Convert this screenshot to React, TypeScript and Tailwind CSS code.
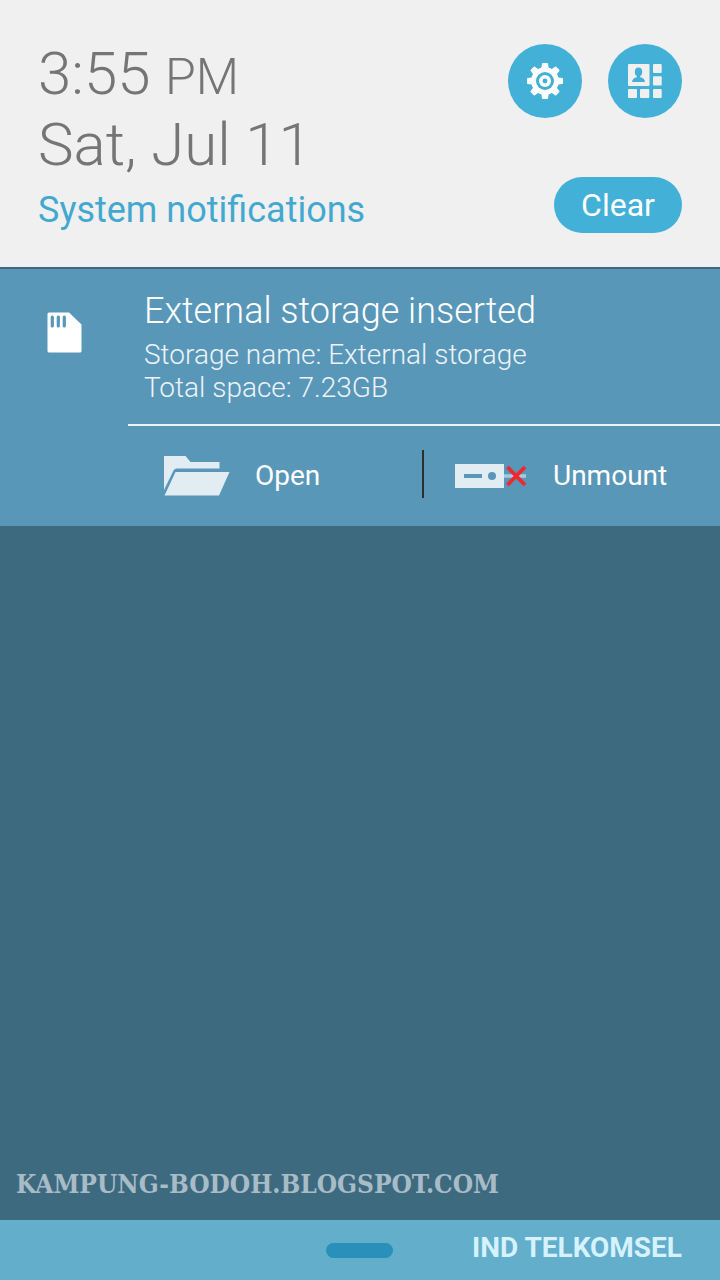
const GEAR_TEETH = [0, 45, 90, 135, 180, 225, 270, 315]

function GearIcon() {
  return (
    <svg viewBox="0 0 36 36" className="size-9" aria-hidden="true">
      <circle cx="18" cy="18" r="13.8" fill="#fff" />
      {GEAR_TEETH.map((angle) => (
        <path
          key={angle}
          d="M11.8 7 L14.4 4.6 L15 0.8 Q15.1 0 15.9 0 H20.1 Q20.9 0 21 0.8 L21.6 4.6 L24.2 7 Z"
          fill="#fff"
          transform={`rotate(${angle} 18 18)`}
        />
      ))}
      <circle cx="18" cy="18" r="9" fill="#43b0d8" />
      <circle cx="18" cy="18" r="6" fill="#fff" />
      <circle cx="18" cy="18" r="2.4" fill="#43b0d8" />
    </svg>
  )
}

function QuickSettingsIcon() {
  return (
    <svg viewBox="0 0 34 34" className="size-[34px]" fill="#f0f0f0" aria-hidden="true">
      <rect width="21.5" height="22" rx="1" />
      <rect x="25" width="8.7" height="9" rx="1" />
      <rect x="25" y="12.3" width="8.7" height="9.3" rx="1" />
      <rect y="25" width="9" height="9" rx="1" />
      <rect x="12" y="25" width="9.3" height="9" rx="1" />
      <rect x="25" y="25" width="8.7" height="9" rx="1" />
      <ellipse cx="10.5" cy="8" rx="3.7" ry="4.4" fill="#43b0d8" />
      <path d="M8.8 11 H12.2 V13.2 Q16.6 14 17 18 H4 Q4.4 14 8.8 13.2 Z" fill="#43b0d8" />
    </svg>
  )
}

function SdCardIcon() {
  return (
    <svg viewBox="0 0 35 41" className="h-[41px] w-[35px]" aria-hidden="true">
      <path d="M2 0.5 H22 L34.5 12.5 V39 Q34.5 40.5 33 40.5 H2 Q0.5 40.5 0.5 39 V2 Q0.5 0.5 2 0.5 Z" fill="#fff" />
      <g fill="#5997b9">
        <rect x="3.7" y="3.5" width="3.2" height="12" rx="1.5" />
        <rect x="9.7" y="3.5" width="3.2" height="12" rx="1.5" />
        <rect x="15.7" y="3.5" width="3.2" height="12" rx="1.5" />
      </g>
    </svg>
  )
}

function FolderIcon() {
  return (
    <svg viewBox="0 0 68 42" className="h-[42px] w-[68px]" fill="#e2edf3" aria-hidden="true">
      <path d="M2 1 H23.5 L28.5 7 H57.5 V13.5 H15 Q12.5 13.5 11.5 15.5 L2 35 Z" />
      <path d="M13.5 17 H67.5 L57 40.5 H2.5 Z" />
    </svg>
  )
}

function UnmountIcon() {
  return (
    <svg viewBox="0 0 74 28" className="h-7 w-[74px]" aria-hidden="true">
      <rect x="1" y="2" width="49" height="24" fill="#e2edf3" />
      <rect x="10" y="12" width="18" height="4" fill="#5997b9" />
      <circle cx="38" cy="14" r="4" fill="#5997b9" />
      <path d="M50 14 H72" stroke="#a9cade" strokeWidth="3.5" />
      <path d="M53.5 5 L71 23 M71 5 L53.5 23" stroke="#f0282d" strokeWidth="3.8" />
    </svg>
  )
}

export default function App() {
  return (
    <div className="flex min-h-screen flex-col bg-[#3e6a80] font-['Roboto',sans-serif]">
      {/* Header */}
      <header className="flex justify-between border-b-2 border-[#3e6a80] bg-[#f0f0f0] px-[38px] pt-[38px] pb-[34px]">
        <div>
          <div className="text-[60px] leading-[71px] font-light text-[#757575]">
            <p>
              3:55 <span className="text-[50px] leading-none">PM</span>
            </p>
            <p>Sat, Jul 11</p>
          </div>
          <h1 className="mt-2 text-[36px] leading-[45px] text-[#43a8d0]">System notifications</h1>
        </div>
        <div className="flex flex-col items-end justify-between pt-[6px]">
          <div className="flex gap-[26px]">
            <button
              type="button"
              aria-label="Settings"
              className="flex size-[74px] items-center justify-center rounded-full bg-[#43b0d8]"
            >
              <GearIcon />
            </button>
            <button
              type="button"
              aria-label="Quick settings"
              className="flex size-[74px] items-center justify-center rounded-full bg-[#43b0d8]"
            >
              <QuickSettingsIcon />
            </button>
          </div>
          <button type="button" className="h-14 w-32 rounded-full bg-[#43b0d8] text-[32px] text-white">
            Clear
          </button>
        </div>
      </header>

      {/* Notification */}
      <main className="flex-grow">
        <article className="flex bg-[#5997b9] text-white">
          <div className="flex w-32 justify-center pt-[43px]">
            <SdCardIcon />
          </div>
          <div className="flex-grow">
            <div className="border-b-2 border-[#edf3f7] px-4 pt-5 pb-5 font-light">
              <h2 className="text-[36px] leading-[45px]">External storage inserted</h2>
              <p className="mt-1 text-[28px] leading-[33px] text-[#edf3f7]">
                Storage name: External storage
                <br />
                Total space: 7.23GB
              </p>
            </div>
            <div className="grid grid-cols-2 pt-6 pb-7 text-[28px]">
              <button type="button" className="flex h-12 items-center gap-[25px] border-r-2 border-[#2e2e2e] pt-1 pl-[34px]">
                <FolderIcon />
                Open
              </button>
              <button type="button" className="flex h-12 items-center gap-[25px] pt-1 pl-[30px]">
                <UnmountIcon />
                Unmount
              </button>
            </div>
          </div>
        </article>
      </main>

      <p className="px-4 pb-4 font-['DejaVu_Serif_Condensed','DejaVu_Serif',serif] text-[26px] leading-[40px] font-bold text-[#a8bcc7]">
        KAMPUNG-BODOH.BLOGSPOT.COM
      </p>

      {/* Carrier bar */}
      <footer className="grid h-[60px] grid-cols-3 items-center bg-[#63aecb] px-[38px]">
        <div className="col-start-2 h-[15px] w-[67px] justify-self-center rounded-full bg-[#2990b9]" />
        <p className="justify-self-end pb-1 text-[28px] leading-7 font-bold whitespace-nowrap text-[#d5f2ff]">
          IND TELKOMSEL
        </p>
      </footer>
    </div>
  )
}
